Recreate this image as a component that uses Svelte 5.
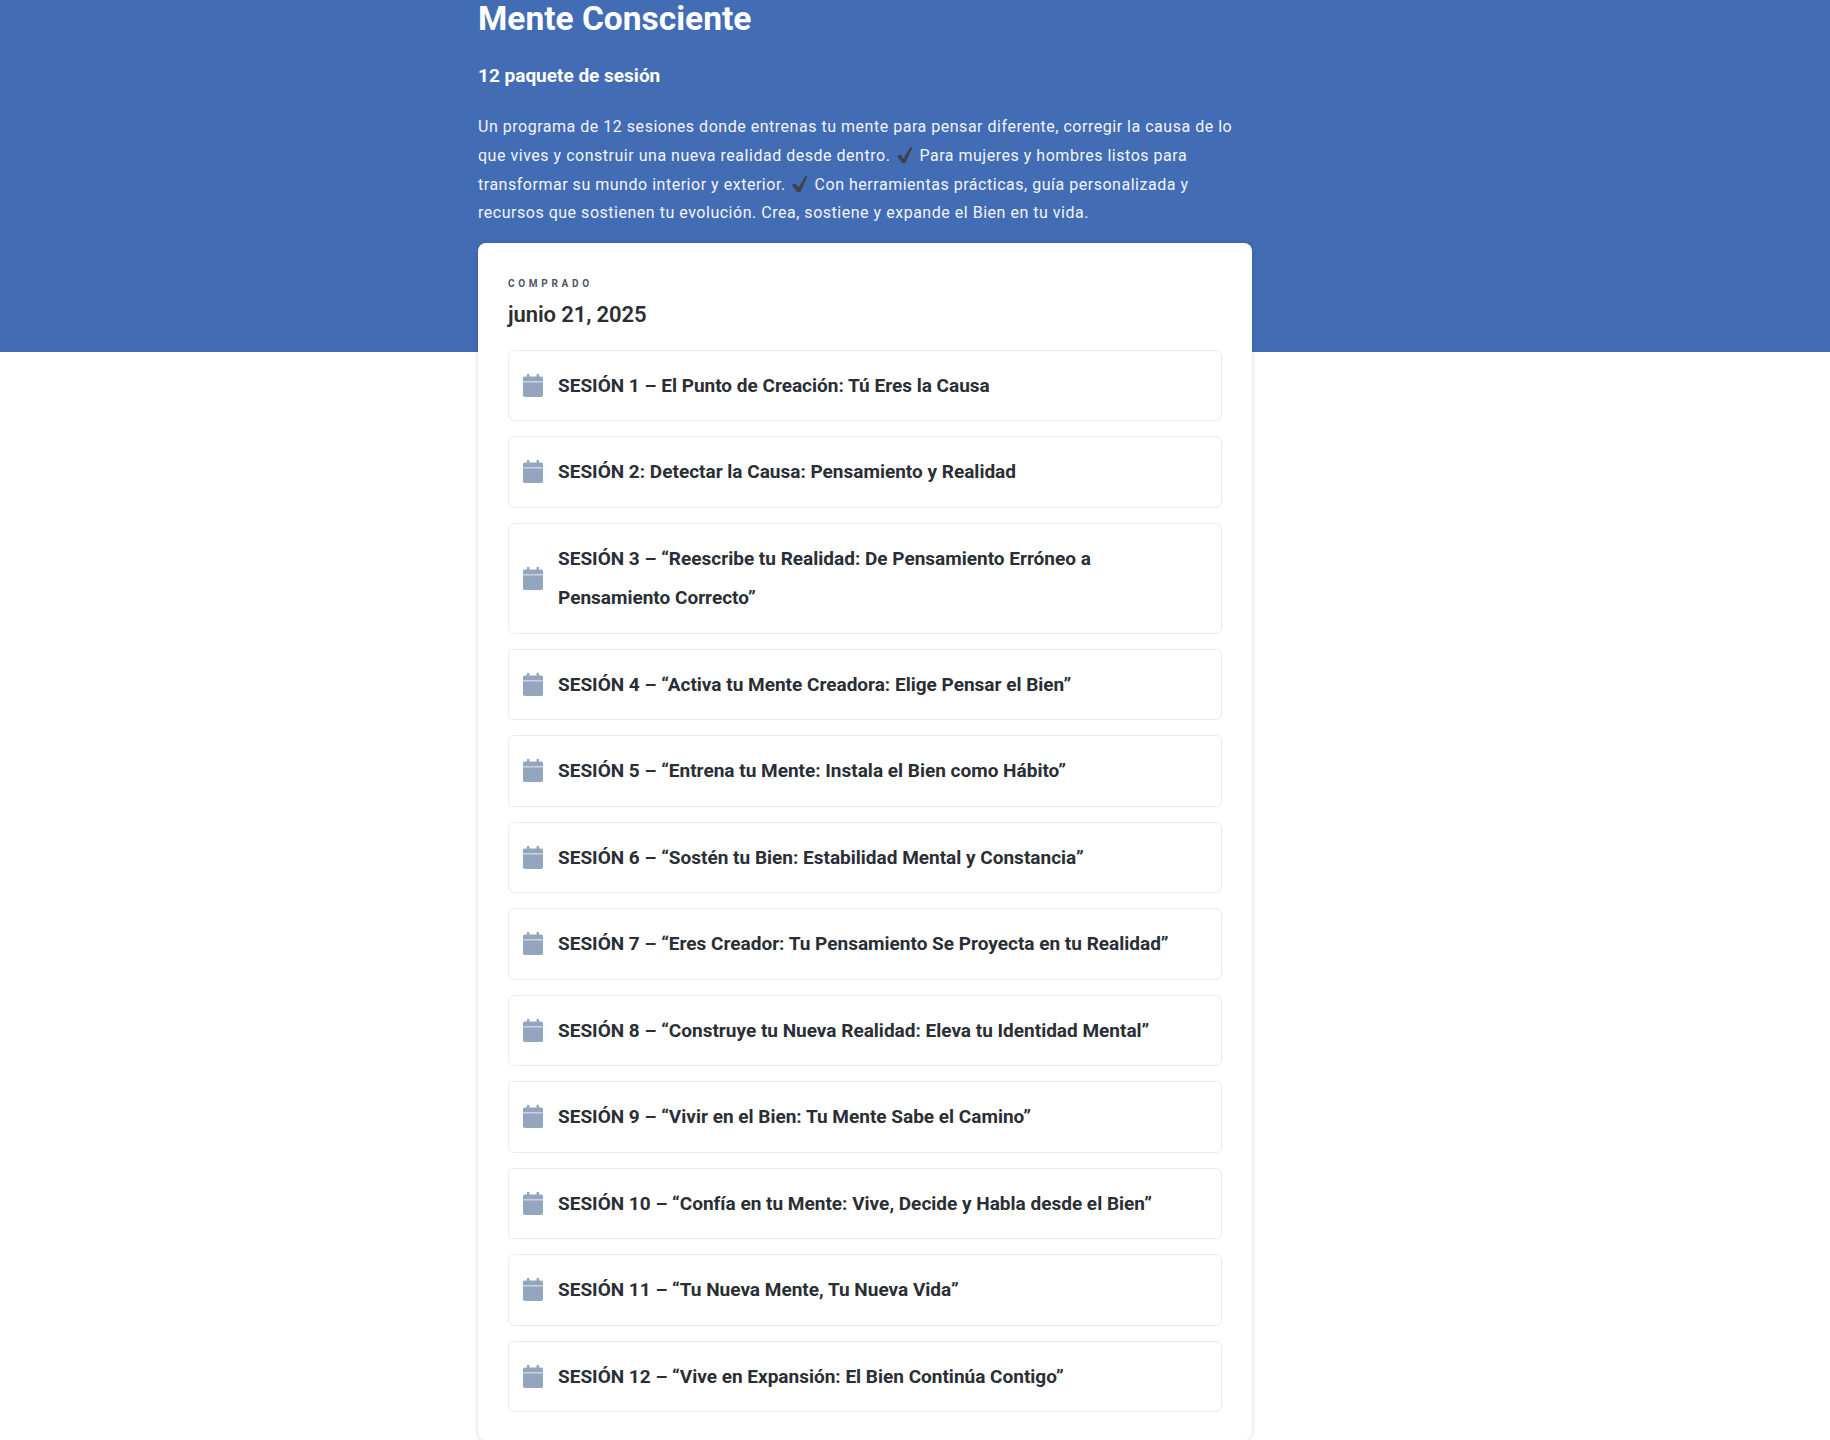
<script>
  const sessions = [
    'SESIÓN 1 – El Punto de Creación: Tú Eres la Causa',
    'SESIÓN 2: Detectar la Causa: Pensamiento y Realidad',
    'SESIÓN 3 – “Reescribe tu Realidad: De Pensamiento Erróneo a Pensamiento Correcto”',
    'SESIÓN 4 – “Activa tu Mente Creadora: Elige Pensar el Bien”',
    'SESIÓN 5 – “Entrena tu Mente: Instala el Bien como Hábito”',
    'SESIÓN 6 – “Sostén tu Bien: Estabilidad Mental y Constancia”',
    'SESIÓN 7 – “Eres Creador: Tu Pensamiento Se Proyecta en tu Realidad”',
    'SESIÓN 8 – “Construye tu Nueva Realidad: Eleva tu Identidad Mental”',
    'SESIÓN 9 – “Vivir en el Bien: Tu Mente Sabe el Camino”',
    'SESIÓN 10 – “Confía en tu Mente: Vive, Decide y Habla desde el Bien”',
    'SESIÓN 11 – “Tu Nueva Mente, Tu Nueva Vida”',
    'SESIÓN 12 – “Vive en Expansión: El Bien Continúa Contigo”'
  ];
</script>

{#snippet check()}
  <svg class="check" viewBox="0 0 18 18" aria-hidden="true"><path d="M1.5 10 L5 8.5 L7.8 12.5 L15 1 L17 1.6 L9.8 17 L6.5 17 Z" fill="#3f4247"/></svg>
{/snippet}

<div class="page">
  <header class="hero">
    <div class="inner">
      <h1>Mente Consciente</h1>
      <p class="sub">12 paquete de sesión</p>
      <p class="desc">Un programa de 12 sesiones donde entrenas tu mente para pensar diferente, corregir la causa de lo que vives y construir una nueva realidad desde dentro. {@render check()} Para mujeres y hombres listos para transformar su mundo interior y exterior. {@render check()} Con herramientas prácticas, guía personalizada y recursos que sostienen tu evolución. Crea, sostiene y expande el Bien en tu vida.</p>
    </div>
  </header>
  <main class="card">
    <div class="label">COMPRADO</div>
    <div class="date">junio 21, 2025</div>
    <ul>
      {#each sessions as s}
        <li>
          <svg class="cal" viewBox="0 0 20 23" aria-hidden="true">
            <path d="M4 0h2.4v3.5H4zM13.6 0H16v3.5h-2.4z" fill="#94a6bf"/>
            <path d="M1.8 2.5H18.2A1.8 1.8 0 0 1 20 4.3V7.4H0V4.3A1.8 1.8 0 0 1 1.8 2.5Z" fill="#94a6bf"/>
            <path d="M0 8.2H20V21.2A1.8 1.8 0 0 1 18.2 23H1.8A1.8 1.8 0 0 1 0 21.2Z" fill="#94a6bf"/>
          </svg>
          <span>{s}</span>
        </li>
      {/each}
    </ul>
  </main>
</div>

<style>
  :global(body) { margin: 0; background: #fff; }
  .page { font-family: Roboto, "Liberation Sans", sans-serif; color: #2a2e35; height: 1440px; overflow: hidden; }
  .hero { background: #426cb4; height: 352px; color: #fff; padding-right: 100px; }
  .inner { width: 774px; margin: 0 auto; }
  h1 { margin: 0; padding-top: 1px; font-size: 33.5px; line-height: 36px; font-weight: 700; }
  .sub { margin: 26px 0 0; font-size: 19px; line-height: 26px; font-weight: 700; }
  .desc { margin: 24px 0 0; font-size: 16px; line-height: 28.8px; letter-spacing: 0.52px; color: #f2f5fa; }
  .check { width: 19px; height: 18px; vertical-align: -3px; margin-right: 1px; }
  .card {
    box-sizing: border-box; width: 774px; margin: -109px 0 0 478px; background: #fff; height: 1197px;
    border-radius: 8px; padding: 33px 30px 0; position: relative;
    box-shadow: 0 0 4px rgba(60, 70, 90, 0.25);
  }
  .label { font-size: 10px; line-height: 16px; font-weight: 700; letter-spacing: 3.7px; color: #4a5568; }
  .date { margin-top: 8px; font-size: 22px; line-height: 30px; font-weight: 600; letter-spacing: -0.1px; color: #2a2e35; }
  ul { list-style: none; margin: 19.7px 0 0; padding: 0; display: flex; flex-direction: column; gap: 15px; }
  li {
    display: flex; align-items: center; gap: 15px; padding: 15px 15px 15px 14px; box-sizing: border-box;
    border: 1px solid #e6ebf3; border-radius: 6px; font-size: 19px; line-height: 39.5px; font-weight: 700; color: #2a2e35;
  }
  li span { flex: 1; }
  .cal { width: 20px; height: 23px; flex: none; }
</style>
